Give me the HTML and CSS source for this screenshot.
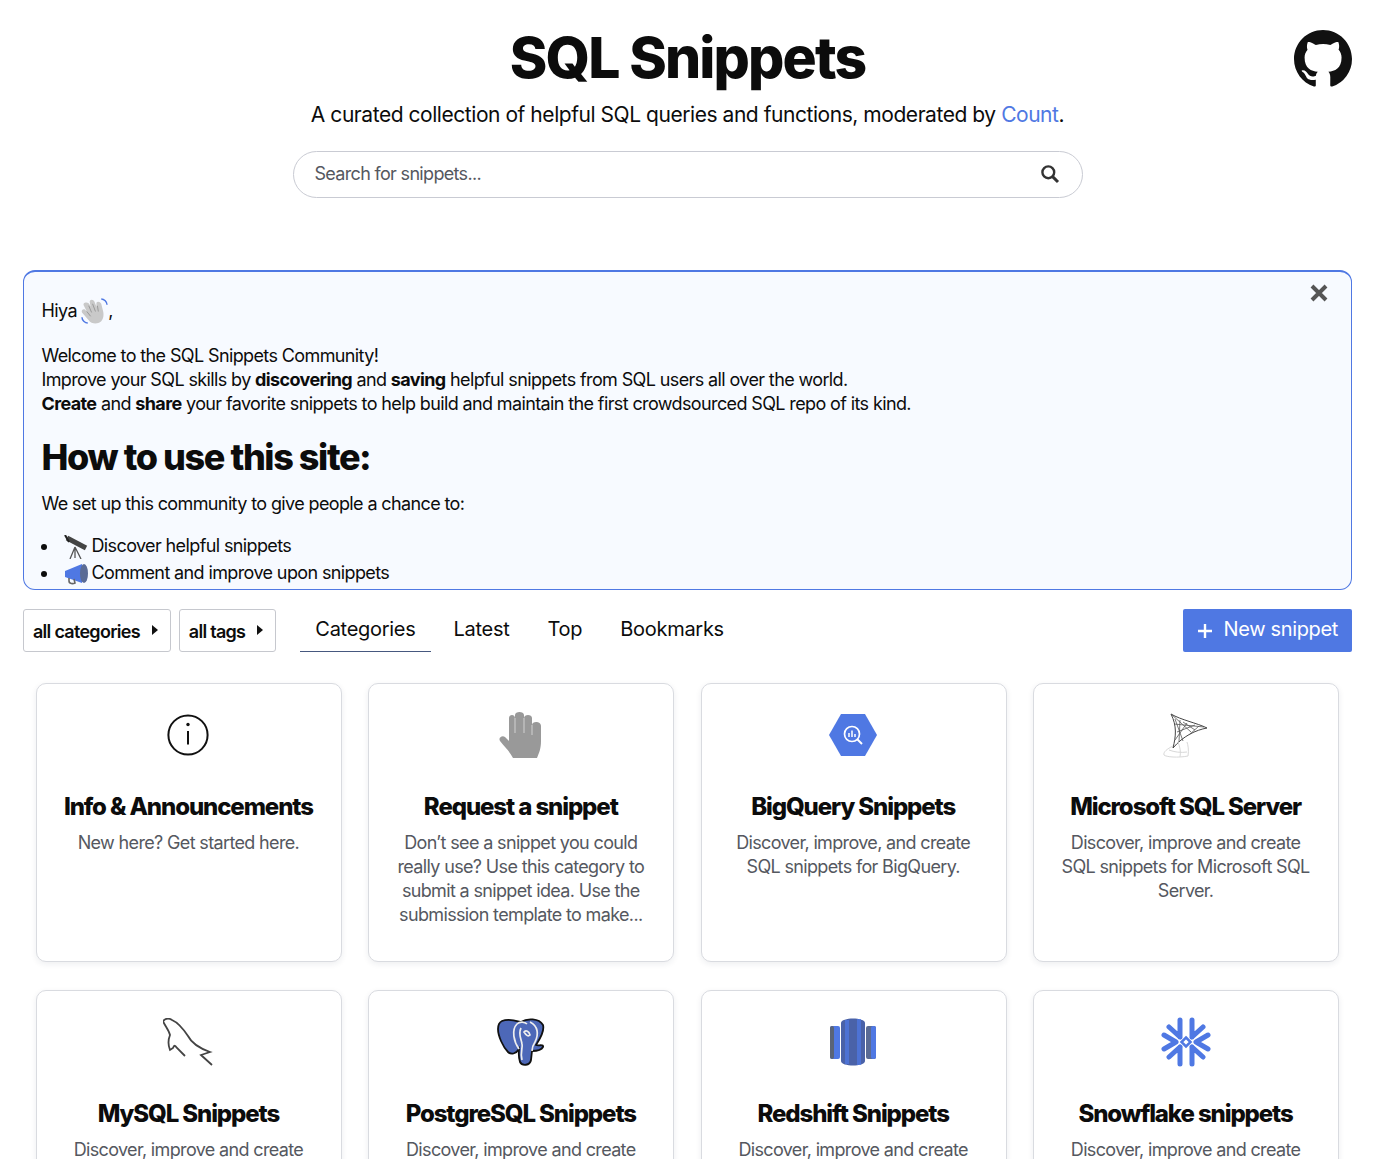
FILE: index.html
```html
<!DOCTYPE html>
<html>
<head>
    <meta charset="UTF-8">
    <title>SQL Snippets</title>
    <link rel="stylesheet" href="styles.css">
</head>
<body>
    <div class="page">
        <header class="site-header">
            <h1>SQL Snippets</h1>
            <p class="tagline">A curated collection of helpful SQL queries and functions, moderated by <a href="#">Count</a>.</p>
            <div class="search-box">
                <span class="search-text">Search for snippets...</span>
                <svg class="search-icon" viewBox="0 0 20 20" width="20" height="20"><circle cx="8.3" cy="8.3" r="5.9" fill="none" stroke="#333" stroke-width="2.4"/><path d="M12.6 12.6 18 18" stroke="#333" stroke-width="3"/></svg>
            </div>
            <a class="github-link" href="#" aria-label="GitHub">
                <svg viewBox="0 0 16 16" width="58" height="58"><path fill="#111" d="M8 0C3.58 0 0 3.58 0 8c0 3.54 2.29 6.53 5.47 7.59.4.07.55-.17.55-.38 0-.19-.01-.82-.01-1.49-2.01.37-2.53-.49-2.69-.94-.09-.23-.48-.94-.82-1.13-.28-.15-.68-.52-.01-.53.63-.01 1.08.58 1.23.82.72 1.21 1.87.87 2.33.66.07-.52.28-.87.51-1.07-1.78-.2-3.64-.89-3.64-3.95 0-.87.31-1.59.82-2.15-.08-.2-.36-1.02.08-2.12 0 0 .67-.21 2.2.82.64-.18 1.32-.27 2-.27s1.36.09 2 .27c1.53-1.04 2.2-.82 2.2-.82.44 1.1.16 1.92.08 2.12.51.56.82 1.27.82 2.15 0 3.07-1.87 3.75-3.65 3.95.29.25.54.73.54 1.48 0 1.07-.01 1.93-.01 2.2 0 .21.15.46.55.38A8.01 8.01 0 0 0 16 8c0-4.42-3.58-8-8-8z"/></svg>
            </a>
        </header>

        <section class="welcome">
            <button class="close-btn" aria-label="Close">
                <svg viewBox="0 0 20 20" width="20" height="20"><path d="M3 3 17 17M17 3 3 17" stroke="#555" stroke-width="4"/></svg>
            </button>
            <p class="greeting">Hiya <svg class="emoji wave" viewBox="0 0 28 28" width="27" height="27"><path fill="#c9c9c9" d="M4 5c2-1 4 0 5 2l1 2-1-5c0-3 4-3 5 0l2 5 0-4c1-2 4-1 5 1l2 8c1 5 0 10-5 12-4 1-8 0-10-3l-7-8c-1-2 1-4 3-3l2 2-3-6c-1-1 0-3 1-3z"/><path d="M8 8l3 7M12 6l3 8M17 8l1 6M6 14l4 5" stroke="#989898" stroke-width="1" fill="none"/><path d="M21 1c3 0 6 3 6 6M1 20c0 3 3 6 6 6" stroke="#4f78e3" stroke-width="1.5" fill="none"/></svg>,</p>
            <p>Welcome to the SQL Snippets Community!<br>
            Improve your SQL skills by <b>discovering</b> and <b>saving</b> helpful snippets from SQL users all over the world.<br>
            <b>Create</b> and <b>share</b> your favorite snippets to help build and maintain the first crowdsourced SQL repo of its kind.</p>
            <h2>How to use this site:</h2>
            <p class="list-intro">We set up this community to give people a chance to:</p>
            <ul>
                <li><svg class="emoji" viewBox="0 0 24 24" width="24" height="24"><path d="M3 3 22 13" stroke="#444" stroke-width="5"/><path d="M1 0 5 7" stroke="#222" stroke-width="2"/><path d="M11 12 6 24M11 12 17 24M11 12v11" stroke="#555" stroke-width="1.3" fill="none"/></svg>Discover helpful snippets</li>
                <li><svg class="emoji" viewBox="0 0 24 24" width="24" height="24"><path fill="#4f78e3" d="M1 9 18 2v19L1 15z"/><ellipse cx="20" cy="11.500" rx="4" ry="9.500" fill="#5a6b95"/><path d="M5 16v3c0 3 4 3 6 2l-1-4" fill="none" stroke="#666" stroke-width="1.6"/></svg>Comment and improve upon snippets</li>
            </ul>
        </section>

        <nav class="toolbar">
            <button class="filter">all categories<i class="caret"></i></button>
            <button class="filter">all tags<i class="caret"></i></button>
            <ul class="tabs">
                <li class="active">Categories</li>
                <li>Latest</li>
                <li>Top</li>
                <li>Bookmarks</li>
            </ul>
            <button class="new-snippet">
                <svg viewBox="0 0 16 16" width="16" height="16"><path d="M8 1v14M1 8h14" stroke="#fff" stroke-width="2.4"/></svg>
                <span>New snippet</span>
            </button>
        </nav>

        <main class="cards">
            <article class="card">
                <div class="card-icon">
                    <svg viewBox="0 0 42 42" width="42" height="42"><circle cx="21" cy="21" r="19.6" fill="none" stroke="#111" stroke-width="2"/><circle cx="21" cy="10.500" r="1.700" fill="#111"/><path d="M21 17v13.500" stroke="#111" stroke-width="2"/></svg>
                </div>
                <h3>Info &amp; Announcements</h3>
                <p>New here? Get started here.</p>
            </article>
            <article class="card">
                <div class="card-icon">
                    <svg viewBox="0 0 44 48" width="44" height="48"><path fill="#999" d="M10 30V7C10 3 16 3 16 7V4C16 0 25 0 25 4V7C25 3 33 3 33 7V14C33 10 42 10 42 15L42 30C42 38 40 42 38 47H14C11 41 6 36 1 30C-1 27 3 24 6 26Z"/><path d="M16 7v15M25 7v15M33 14v10" stroke="#fff" stroke-width=".8" opacity=".7"/></svg>
                </div>
                <h3>Request a snippet</h3>
                <p>Don’t see a snippet you could really use? Use this category to submit a snippet idea. Use the submission template to make...</p>
            </article>
            <article class="card">
                <div class="card-icon">
                    <svg viewBox="0 0 48 44" width="48" height="44"><path fill="#4f78e3" d="M0 22 12 1h24l12 21-12 21H12z"/><circle cx="23" cy="21" r="7.500" fill="none" stroke="#fff" stroke-width="1.700"/><path d="M28.500 26.500 33 31" stroke="#fff" stroke-width="2"/><path d="M20 20v4M23 17.500V24M26 21v3" stroke="#fff" stroke-width="1.500"/></svg>
                </div>
                <h3>BigQuery Snippets</h3>
                <p>Discover, improve, and create SQL snippets for BigQuery.</p>
            </article>
            <article class="card">
                <div class="card-icon">
                    <svg viewBox="0 0 46 46" width="46" height="46"><path d="M8 2C18 8 34 11 44 16 33 18 20 24 10 36 13 24 14 14 8 2z" fill="#fff" stroke="#444" stroke-width="1"/><path d="M8 2 28 20M12 7l8 22M17 8l-1 22M24 11 12 28M32 13 14 20M11 12l30 3M36 14 26 23M20 10l12 8" stroke="#555" stroke-width=".8" fill="none"/><path d="M10 34C4 37 0 40 1 43c2 2 14 3 24 1 1-6 0-11-1-14M6 38c5 2 12 3 18 2M15 30c2 5 3 10 2 15" fill="none" stroke="#d8d8d8" stroke-width="1"/></svg>
                </div>
                <h3>Microsoft SQL Server</h3>
                <p>Discover, improve and create SQL snippets for Microsoft SQL Server.</p>
            </article>
            <article class="card">
                <div class="card-icon">
                    <svg viewBox="0 0 50 48" width="50" height="48"><path d="M0 3C3 0 6 0 9 2 16 5 21 12 25 18 28 24 33 29 47 34L38 37 49 47M0 3C2 8 6 12 7 17 5 22 5 27 7 32L10 30C11 27 12 27 14 30L22 38" fill="none" stroke="#444" stroke-width="1.800"/></svg>
                </div>
                <h3>MySQL Snippets</h3>
                <p>Discover, improve and create</p>
            </article>
            <article class="card">
                <div class="card-icon">
                    <svg viewBox="0 0 48 48" width="48" height="48"><path fill="#4d68b8" stroke="#111" stroke-width="1.800" d="M5 3C12 0 20 3 24 4 30 0 42 0 46 7 48 14 42 22 39 27 41 28 47 26 46 29 44 33 38 33 35 33L34 42C33 48 25 48 23 44 21 38 22 34 22 31 19 36 14 37 11 34 6 29 1 18 1 11 1 7 3 4 5 3Z"/><path d="M22 31C17 24 14 12 20 6 23 3 28 4 30 6M24 10C21 16 24 20 25 26 26 30 23 33 25 42M33 4C41 8 42 16 38 24 36 27 35 29 35 33M27 14C29 12 32 13 33 17 31 19 29 17 27 14Z" fill="none" stroke="#eee" stroke-width="1.700"/></svg>
                </div>
                <h3>PostgreSQL Snippets</h3>
                <p>Discover, improve and create</p>
            </article>
            <article class="card">
                <div class="card-icon">
                    <svg viewBox="0 0 46 48" width="46" height="48"><rect x="0" y="8" width="10" height="33" rx="2" fill="#4f78e3"/><rect x="0" y="8" width="4" height="33" rx="2" fill="#5a6478"/><rect x="36" y="8" width="10" height="33" rx="2" fill="#5a6b95"/><rect x="41" y="8" width="5" height="33" rx="2" fill="#4f78e3"/><path fill="#4a62a8" d="M11 5C11-1 35-1 35 5V43C35 49 11 49 11 43Z"/><path fill="#4f78e3" d="M15 2H19V46H15ZM27 1H31V47H27Z" opacity=".75"/></svg>
                </div>
                <h3>Redshift Snippets</h3>
                <p>Discover, improve and create</p>
            </article>
            <article class="card">
                <div class="card-icon">
                    <svg viewBox="0 0 50 50" width="50" height="50" fill="none" stroke="#4f78e3" stroke-linecap="round"><path stroke-width="5" d="M19 3V20M8 10 19 20M31 3V20M42 10 31 20M3 18 15 25M3 32 15 25M47 18 35 25M47 32 35 25M19 47V30M8 40 19 30M31 47V30M42 40 31 30"/><path stroke-width="2.500" d="M25 20.500 29.500 25 25 29.500 20.500 25z"/></svg>
                </div>
                <h3>Snowflake snippets</h3>
                <p>Discover, improve and create</p>
            </article>
        </main>
    </div>
</body>
</html>
```

FILE: styles.css
```css
* {
    box-sizing: border-box;
}

body {
    background-color: #ffffff;
    color: #0c0c0c;
    font-family: Inter, "Liberation Sans", sans-serif;
    margin: 0;
    padding: 0;
}

.page {
    height: 100vh;
    overflow: hidden;
    padding: 0 48px 0 23px;
}

.site-header {
    position: relative;
    display: flex;
    flex-direction: column;
    align-items: center;
    height: 270px;
    padding-top: 23px;
}

.site-header h1 {
    font-size: 57px;
    font-weight: 800;
    letter-spacing: -1.85px;
    line-height: 70px;
    margin: 0;
}

.tagline {
    font-size: 21px;
    letter-spacing: -0.45px;
    line-height: 28px;
    margin: 8px 0 0;
}

.tagline a {
    color: #4f78e3;
    text-decoration: none;
}

.search-box {
    display: flex;
    align-items: center;
    justify-content: space-between;
    width: 790px;
    height: 47px;
    margin-top: 22px;
    padding: 0 22px 2px 21px;
    border: 1px solid #c9cbd3;
    border-radius: 24px;
}

.search-text {
    color: #555860;
    font-size: 18px;
    letter-spacing: -0.68px;
}

.github-link {
    position: absolute;
    top: 30px;
    right: 0;
    height: 58px;
}

.welcome {
    position: relative;
    height: 320px;
    overflow: hidden;
    padding: 27px 18px 0 17.5px;
    background-color: #f7faff;
    border: 1.5px solid #4f78e3;
    border-top-width: 2px;
    border-radius: 12px;
    font-size: 18px;
    letter-spacing: -0.62px;
    line-height: 24px;
}

.welcome p {
    margin: 0 0 20px;
}

.welcome .greeting {
    height: 24px;
    margin-bottom: 21px;
}

.welcome b {
    font-weight: 700;
}

.welcome h2 {
    font-size: 36px;
    font-weight: 800;
    letter-spacing: -1.4px;
    line-height: 42px;
    margin: 0 0 14px;
}

.welcome .list-intro {
    margin-bottom: 18px;
}

.welcome ul {
    margin: 0;
    padding-left: 17px;
}

.welcome li {
    height: 27px;
    padding-left: 5px;
}

.emoji {
    vertical-align: middle;
    margin-right: 4px;
}

.wave {
    margin-top: -2px;
    margin-right: 0;
}

.close-btn {
    position: absolute;
    top: 11px;
    right: 22px;
    padding: 0;
    background: none;
    border: none;
}

.toolbar {
    display: flex;
    align-items: flex-start;
    margin-top: 19px;
}

.filter {
    display: flex;
    align-items: center;
    height: 43px;
    margin-right: 9px;
    padding: 2px 12px 0 9px;
    background-color: #ffffff;
    border: 1px solid #c6c8ce;
    border-radius: 3px;
    color: #0c0c0c;
    font-family: inherit;
    font-size: 18px;
    font-weight: 600;
    letter-spacing: -0.72px;
}

.filter + .filter {
    margin-left: -1px;
}

.caret {
    margin-left: 12px;
    margin-top: -3px;
    border-left: 6px solid #111111;
    border-top: 5px solid transparent;
    border-bottom: 5px solid transparent;
}

.tabs {
    display: flex;
    flex: 1;
    list-style: none;
    margin: 0 0 0 15px;
    padding: 0;
}

.tabs li {
    height: 43px;
    margin-right: 8px;
    padding: 6px 15px 0;
    font-size: 20px;
    letter-spacing: -0.28px;
    line-height: 28px;
}

.tabs .active {
    border-bottom: 1.5px solid #46587f;
}

.new-snippet {
    display: flex;
    align-items: center;
    gap: 11px;
    height: 43px;
    padding: 0 14px;
    background-color: #4f78e3;
    border: none;
    border-radius: 2px;
    color: #ffffff;
    font-family: inherit;
    font-size: 20px;
    letter-spacing: -0.35px;
}

.new-snippet span {
    margin-bottom: 4px;
}

.cards {
    display: grid;
    grid-template-columns: repeat(4, 305.8px);
    column-gap: 26.6px;
    row-gap: 28px;
    margin-top: 31px;
    padding: 0 13px;
}

.card {
    height: 279px;
    padding: 26px 25px 0 24px;
    background-color: #ffffff;
    border: 1px solid #d9dbe0;
    border-radius: 10px;
    box-shadow: 0 2px 6px rgba(30, 40, 70, 0.08);
    text-align: center;
}

.card-icon {
    display: flex;
    align-items: center;
    justify-content: center;
    height: 50px;
}

.card h3 {
    font-size: 24px;
    font-weight: 800;
    letter-spacing: -1.1px;
    line-height: 30px;
    margin: 32px 0 9px;
}

.card p {
    color: #555860;
    font-size: 18px;
    letter-spacing: -0.65px;
    line-height: 24px;
    margin: 0;
}
```
